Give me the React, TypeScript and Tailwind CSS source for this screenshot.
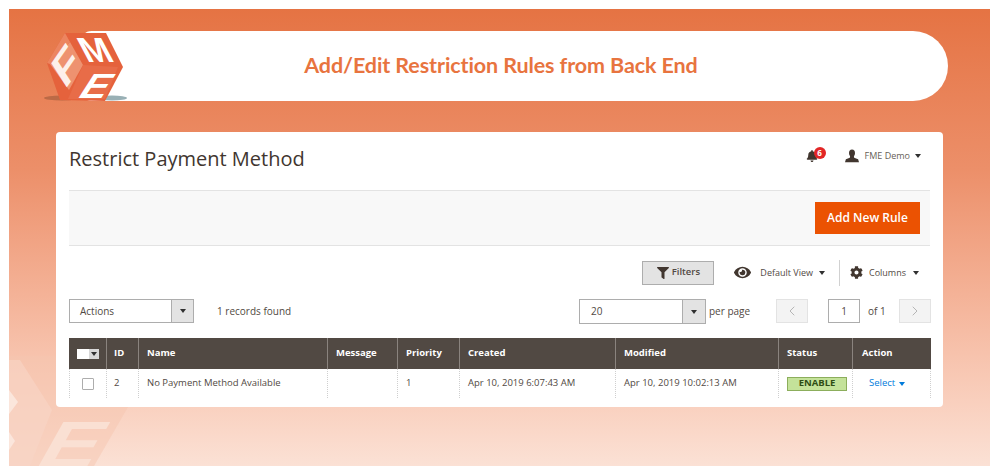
import { ChevronLeft, ChevronRight } from 'lucide-react';
import { FaBell, FaCog, FaEye, FaFilter } from 'react-icons/fa';

const columns = [
  { label: 'ID', width: 'w-[32px] pl-[7px]' },
  { label: 'Name', width: 'w-[189px] pl-[8px]' },
  { label: 'Message', width: 'w-[70px] pl-[8px]' },
  { label: 'Priority', width: 'w-[62px] pl-[8px]' },
  { label: 'Created', width: 'w-[156px] pl-[8px]' },
  { label: 'Modified', width: 'w-[163px] pl-[8px]' },
  { label: 'Status', width: 'w-[74px] pl-[8px]' },
  { label: 'Action', width: 'w-[78px] pl-[9px]' },
];

function Caret({ className = 'border-t-[#303030]' }: { className?: string }) {
  return <span className={`inline-block h-0 w-0 border-x-[3.5px] border-t-[4px] border-x-transparent ${className}`} />;
}

// coordinates in the viewBox are page pixels, read off the reference
function Logo() {
  return (
    <svg viewBox="40 28 100 78" className="absolute top-[19px] left-[31px] h-[78px] w-[100px]">
      <ellipse cx="62" cy="98" rx="18" ry="2.5" fill="#a8603f" opacity="0.7" />
      <ellipse cx="112" cy="98" rx="15" ry="2.5" fill="#7f9ca3" opacity="0.8" />
      <polygon points="65,33 106,33 123,67 105,101 60,100 47,63" fill="#e5623c" />
      <polygon points="70,42 83,65 69,90 50,64" fill="#ee9270" />
      <polygon points="47,63 65,33 70,42 50,64" fill="#ec8560" />
      <polygon points="83,65 118,67 105,99 68,99" fill="#e86c48" />
      <text transform="matrix(0.8 -1.15 0.64 1 65 90)" fontFamily="Liberation Sans, sans-serif" fontWeight="700" fontSize="35" fill="#fdf0ea">F</text>
      <text transform="matrix(1 0 0.53 1 87 62)" fontFamily="Liberation Sans, sans-serif" fontWeight="700" fontSize="35" fill="#ffffff">M</text>
      <text transform="matrix(1.15 0 -0.64 1 76 98)" fontFamily="Liberation Sans, sans-serif" fontWeight="700" fontSize="35" fill="#ffffff">E</text>
    </svg>
  );
}

function Watermark() {
  return (
    <svg viewBox="9 356 130 110" className="absolute bottom-0 left-0 h-[110px] w-[130px]">
      <polygon points="9,356 60,356 60,407 128,407 94,466 9,466" fill="#f5c5af" opacity="0.5" />
      <polygon points="9,360 20,360 52,410 30,466 9,466" fill="#f9d6c6" opacity="0.6" />
      <polygon points="9,390 18,402 9,414" fill="#fbe6dc" />
      <polygon points="9,432 15,441 9,450" fill="#fbe6dc" />
      <text transform="matrix(1.35 0 -0.56 1 33 466)" fontFamily="Liberation Sans, sans-serif" fontWeight="700" fontSize="64" fill="#fae0d3">E</text>
    </svg>
  );
}

function UserIcon() {
  return (
    <svg viewBox="0 0 16 15" className="mr-[6px] h-[14px] w-[14px] text-[#41362f]" fill="currentColor">
      <ellipse cx="8" cy="4.2" rx="3.4" ry="4.2" />
      <polygon points="6,7 10,7 10.5,9.5 15,11.2 16,14.5 0,14.5 1,11.2 5.5,9.5" />
    </svg>
  );
}

export default function App() {
  return (
    <div className="h-[474px] w-[1000px] bg-white pt-[9px] pr-[10px] pb-[8px] pl-[9px] font-['Open_Sans',sans-serif]">
      <div className="relative flex h-full flex-col overflow-hidden bg-gradient-to-b from-[#e57343] via-[#ec8f69] via-35% to-[#fbe1d5]">
        <Watermark />
        <div className="relative mt-[22px] ml-[71px] flex h-[70px] w-[868px] items-center justify-center rounded-l-[12px] rounded-r-[36px] bg-white pr-[26px] pb-[2px]">
          <h1 className="font-['Lato',sans-serif] text-[21.5px] font-bold tracking-[-0.1px] text-[#e8743f]">Add/Edit Restriction Rules from Back End</h1>
        </div>
        <Logo />

        <div className="relative mt-[31px] ml-[47px] h-[275px] w-[887px] rounded-[4px] bg-white px-[13px]">
          <div className="flex h-[58px] items-center justify-between">
            <h2 className="pb-[4px] text-[20px] text-[#41362f]">Restrict Payment Method</h2>
            <div className="flex items-center pr-[9px] pb-[10px]">
              <span className="relative mr-[27px] text-[#41362f]">
                <FaBell className="size-[12px]" />
                <span className="absolute -top-[3px] left-[8px] flex size-[12px] items-center justify-center rounded-full bg-[#e22626] text-[8px] font-bold text-white">6</span>
              </span>
              <UserIcon />
              <span className="mr-[5px] text-[9px] text-[#676056]">FME Demo</span>
              <Caret />
            </div>
          </div>

          <div className="flex h-[56px] items-center justify-end border-y border-[#e3e3e3] bg-[#f8f8f8] pr-[10px]">
            <button className="h-[32px] w-[105px] bg-[#eb5202] text-[12px] font-semibold text-white">Add New Rule</button>
          </div>

          <div className="flex h-[52px] items-center justify-end pt-[1px] pr-[11px] text-[9px] text-[#41362f]">
            <button className="mr-[20px] flex h-[24px] w-[72px] items-center justify-center gap-[3px] border border-[#adadad] bg-[#e3e3e3] text-[9.5px] font-semibold text-[#514943]">
              <FaFilter className="size-[12px] text-[#41362f]" />
              Filters
            </button>
            <FaEye className="mr-[9px] size-[17px]" />
            <span className="mr-[6px] text-[#514943]">Default View</span>
            <Caret />
            <span className="mr-[10px] ml-[14px] h-[26px] w-px bg-[#d1d1d1]" />
            <FaCog className="mr-[6px] size-[13px]" />
            <span className="mr-[7px] text-[#514943]">Columns</span>
            <Caret />
          </div>

          <div className="flex h-[40px] w-[862px] items-start text-[10px] text-[#514943]">
            <div className="mt-[1px] flex h-[24px] w-[125px] items-center border border-[#adadad] pl-[10px]">
              <span className="flex-1 pt-[1px]">Actions</span>
              <span className="flex h-full w-[22px] items-center justify-center border-l border-[#adadad] bg-[#e3e3e3]"><Caret /></span>
            </div>
            <span className="mt-[6px] ml-[23px] w-[362px]">1 records found</span>
            <div className="mt-[1px] flex h-[25px] w-[127px] items-center border border-[#adadad] pl-[11px]">
              <span className="flex-1">20</span>
              <span className="flex h-full w-[23px] items-center justify-center border-l border-[#adadad] bg-[#e3e3e3]"><Caret /></span>
            </div>
            <span className="mt-[6px] ml-[3px] w-[67px]">per page</span>
            <button className="mt-[1px] flex h-[24px] w-[32px] items-center justify-center border border-[#e3e3e3] bg-[#f3f3f3] text-[#a8a8a8]"><ChevronLeft className="size-[16px]" strokeWidth={1.25} /></button>
            <span className="mt-[1px] ml-[20px] flex h-[24px] w-[32px] items-center justify-center border border-[#adadad]">1</span>
            <span className="mt-[6px] ml-[8px] w-[31px]">of 1</span>
            <button className="mt-[1px] flex h-[24px] w-[32px] items-center justify-center border border-[#e3e3e3] bg-[#f3f3f3] text-[#a8a8a8]"><ChevronRight className="size-[16px]" strokeWidth={1.25} /></button>
          </div>

          <div className="flex h-[31px] w-[862px] items-center bg-[#514943] text-[9.5px] font-bold text-white">
            <div className="flex h-full w-[38px] items-center justify-center border-r border-[#8a837e]">
              <span className="flex h-[10px] w-[22px]">
                <span className="flex-1 bg-white" />
                <span className="flex w-[10px] items-center justify-center bg-[#d8d8d8]"><Caret /></span>
              </span>
            </div>
            {columns.map((c, i) => (
              <div key={c.label} className={`flex h-full items-center ${c.width} ${i < columns.length - 1 ? 'border-r border-[#8a837e]' : ''}`}>
                {c.label}
              </div>
            ))}
          </div>

          <div className="flex h-[29px] w-[862px] items-center text-[9.5px] text-[#514943]">
            <div className="flex h-full w-[38px] items-center justify-center border-x border-dotted border-[#cfcfcf]">
              <span className="size-[12px] rounded-[1px] border border-[#adadad]" />
            </div>
            <div className="flex h-full w-[32px] items-center border-r border-dotted border-[#cfcfcf] pl-[7px]">2</div>
            <div className="flex h-full w-[189px] items-center border-r border-dotted border-[#cfcfcf] pl-[8px]">No Payment Method Available</div>
            <div className="h-full w-[70px] border-r border-dotted border-[#cfcfcf]" />
            <div className="flex h-full w-[62px] items-center border-r border-dotted border-[#cfcfcf] pl-[8px]">1</div>
            <div className="flex h-full w-[156px] items-center border-r border-dotted border-[#cfcfcf] pl-[8px]">Apr 10, 2019 6:07:43 AM</div>
            <div className="flex h-full w-[163px] items-center border-r border-dotted border-[#cfcfcf] pl-[8px]">Apr 10, 2019 10:02:13 AM</div>
            <div className="flex h-full w-[74px] items-center border-r border-dotted border-[#cfcfcf] pl-[8px]">
              <span className="flex h-[14px] w-[60px] items-center justify-center border border-[#8cae5c] bg-[#c4e29a] text-[9.5px] font-bold text-[#2f4d14]">ENABLE</span>
            </div>
            <div className="flex h-full w-[78px] items-center gap-[4px] border-r border-dotted border-[#cfcfcf] pl-[16px] text-[#007bdb]">
              Select
              <Caret className="border-t-[#007bdb]" />
            </div>
          </div>
        </div>
      </div>
    </div>
  );
}
